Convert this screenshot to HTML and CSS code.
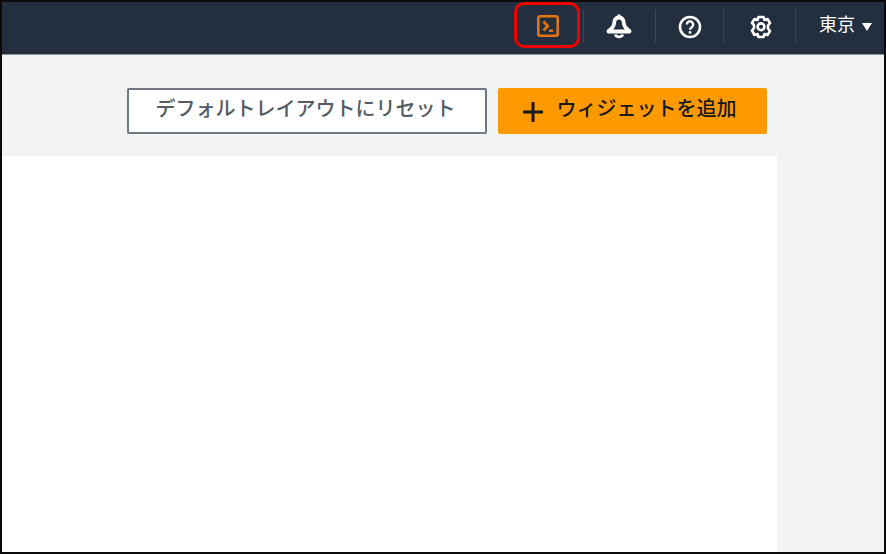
FILE: index.html
```html
<!DOCTYPE html>
<html lang="ja">
<head>
<meta charset="utf-8">
<title>Console</title>
<link rel="stylesheet" href="styles.css">
</head>
<body>
<div class="frame">
  <header class="topbar">
    <div class="nav-item nav-terminal">
      <svg class="icon" width="24" height="24" viewBox="0 0 24 24" fill="none" stroke="#e5730f" stroke-width="2.600"><rect x="2.300" y="2.300" width="19.400" height="19.400" rx="2"/><path d="M7.500 7.500l4.300 4.500-4.300 4.500M13 16.800h4"/></svg>
      <span class="callout"></span>
    </div>
    <span class="sep"></span>
    <div class="nav-item nav-bell">
      <svg class="icon" width="28" height="26" viewBox="0 0 28 26" fill="none" stroke="#fff" stroke-width="3.800" stroke-linejoin="round"><path d="M14 4.500c-3.300 0-4.800 2.500-4.800 5.500 0 3.200-2.200 5.500-5.700 8v.5h21V18c-3.500-2.500-5.700-4.800-5.700-8 0-3-1.500-5.500-4.800-5.500z"/><path d="M10.300 21.500a3.800 3.200 0 0 0 7.400 0" stroke-width="2.800"/><path d="M14 1.500v2.500" stroke-width="3"/></svg>
    </div>
    <span class="sep"></span>
    <div class="nav-item nav-help">
      <svg class="icon" width="24" height="24" viewBox="0 0 24 24" fill="none" stroke="#fff" stroke-width="2.600"><circle cx="12" cy="12" r="10"/><path d="M8.800 9.500a3.200 3.200 0 1 1 5 2.700c-1.200.8-1.800 1.400-1.800 2.600" stroke-width="2.400"/><path d="M12 16.200v2.400" stroke-width="2.600"/></svg>
    </div>
    <span class="sep"></span>
    <div class="nav-item nav-gear">
      <svg class="icon" width="24" height="24" viewBox="0 0 24 24" fill="none" stroke="#fff" stroke-width="2.600" stroke-linejoin="round"><path d="M9.500 2h5l1 3 3-1 2.500 4-2 2.500v3l2 2.500-2.500 4-3-1-1 3h-5l-1-3-3 1L3 15.500l2-2.500v-3L3 8l2.500-4 3 1z"/><circle cx="12" cy="11.800" r="3.400"/></svg>
    </div>
    <span class="sep"></span>
    <div class="nav-item nav-region">
      <span class="region-label">東京</span>
      <span class="caret"></span>
    </div>
  </header>
  <main class="content">
    <div class="actions">
      <button class="btn btn-reset">デフォルトレイアウトにリセット</button>
      <button class="btn btn-add"><span class="plus">
        <svg width="20" height="20" viewBox="0 0 20 20" stroke="#16191f" stroke-width="3" fill="none"><path d="M10 0v20M0 10h20"/></svg>
      </span>ウィジェットを追加</button>
    </div>
    <div class="panel"></div>
  </main>
</div>
</body>
</html>
```
FILE: styles.css
```css
* { box-sizing: border-box; }
html, body { margin: 0; padding: 0; }
body { background: #000; }
.frame {
  width: 886px;
  height: 554px;
  border: 2px solid #0a0a0a;
  background: #f2f3f3;
  display: flex;
  flex-direction: column;
  overflow: hidden;
  font-family: "Noto Sans CJK JP", "Noto Sans", sans-serif;
}
.topbar {
  height: 53px;
  flex: none;
  background: #232f3e;
  display: flex;
  align-items: center;
  justify-content: flex-end;
  border-bottom: 1px solid #8a929b;
  padding-bottom: 3px;
}
.nav-item {
  display: flex;
  align-items: center;
  justify-content: center;
  height: 100%;
  position: relative;
}
.sep {
  width: 1px;
  height: 33px;
  background: #3b4756;
  flex: none;
}
.nav-terminal { width: 68px; padding-right: 2px; padding-bottom: 2px; }
.nav-bell { width: 71px; padding-right: 2px; padding-bottom: 2px; }
.nav-help { width: 67px; }
.nav-gear { width: 71px; padding-left: 2px; }
.nav-region { width: 88px; justify-content: flex-start; padding-left: 23px; gap: 7px; }
.callout {
  position: absolute;
  left: -1px;
  top: 0;
  width: 66px;
  height: 46px;
  border: 3px solid #f00000;
  border-radius: 10px;
}
.region-label { color: #fff; font-size: 18px; line-height: 24px; margin-bottom: 8px; }
.caret {
  width: 0;
  height: 0;
  border-left: 5.500px solid transparent;
  border-right: 5.500px solid transparent;
  border-top: 8px solid #fff;
  margin-top: 1px;
}
.content {
  flex: 1;
  display: flex;
  flex-direction: column;
  min-height: 0;
}
.actions {
  display: flex;
  justify-content: flex-end;
  gap: 11px;
  padding: 33px 117px 0 0;
  height: 101px;
  flex: none;
}
.btn {
  font-family: inherit;
  font-size: 20px;
  font-weight: 500;
  height: 46px;
  display: flex;
  align-items: center;
  justify-content: center;
  padding: 0;
  border-radius: 2px;
  line-height: 1;
  padding-bottom: 7px;
}
.btn-reset {
  width: 360px;
  background: #fff;
  color: #545b64;
  border: 2px solid #6f7782;
  padding-right: 3px;
}
.btn-add {
  width: 269px;
  background: #ff9900;
  color: #16191f;
  border: none;
  gap: 14px;
  padding-right: 6px;
}
.plus { display: flex; margin-top: 8px; }
.panel {
  flex: 1;
  width: 775px;
  background: #fff;
}
```
